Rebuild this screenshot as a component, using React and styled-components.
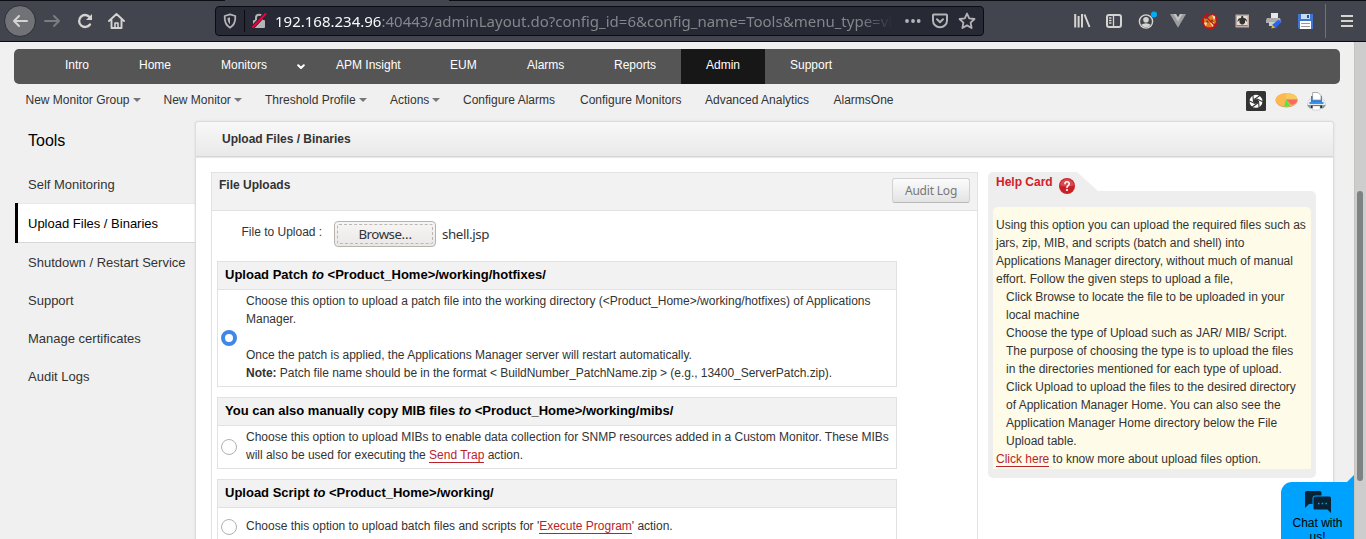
import React from 'react';
import styled, { createGlobalStyle } from 'styled-components';

const Global = createGlobalStyle`
  * { box-sizing: border-box; }
  body { margin: 0; overflow: hidden; background: #f0f0f0; }
`;
const Window = styled.div`
  width: 1366px; height: 539px; overflow: hidden; display: flex; flex-direction: column;
  font: 12px/18px "Liberation Sans", Arial, sans-serif; color: #333;
`;

/* Browser toolbar */
const TabEdge = styled.div`
  height: 1px; flex: none; display: flex; justify-content: space-between; background: #42454e;
`;
const Edge = styled.i`height: 1px; width: ${p => p.$w}px; background: #0d0e14;`;
const Chrome = styled.header`
  height: 41px; flex: none; display: flex; align-items: center;
  background: #42454d; border-bottom: 1px solid #0c0c0d; color: #d4d4d1;
`;
const Controls = styled.div`width: 215px; display: flex; align-items: center; padding-left: 4px;`;
const Back = styled.div`
  width: 32px; height: 32px; border-radius: 50%; background: #717278; border: 1px solid #2d2e34;
  display: flex; align-items: center; justify-content: center; margin-right: 8px;
`;
const Address = styled.div`
  width: 769px; height: 30px; border: 1px solid #0b0c13; border-radius: 4px; background: #272935;
  display: flex; align-items: center; padding-left: 6px; color: #b4b4b6;
`;
const Separator = styled.i`width: 1px; height: 22px; background: #0b0c13; margin: 0 6px 0 6px;`;
const Url = styled.div`
  width: 621px; margin-left: 8px; overflow: hidden; white-space: nowrap; color: #85868b;
  font: 15px/26px "Noto Sans", sans-serif;
  mask-image: linear-gradient(90deg, #000 585px, transparent 618px);
  b { font-weight: 400; color: #f9f9fa; }
`;
const AddressIcons = styled.div`display: flex; align-items: center; gap: 10px; margin-left: 8px;`;
const Extensions = styled.div`display: flex; align-items: center; gap: 14px; margin-left: 89px;`;
const MenuZone = styled.div`
  height: 34px; margin-left: 11px; padding-left: 15px; border-left: 1px solid #717278;
  display: flex; align-items: center;
`;

/* Page */
const Viewport = styled.div`flex: 1; min-height: 0; display: flex; background: #f0f0f0;`;
const Page = styled.div`width: 1354px; height: 497px; overflow: hidden; position: relative;`;
const ScrollTrack = styled.div`
  width: 12px; background: #cdcdcd; border-left: 1px solid #c6c3bf; padding: 149px 0 0 2px;
`;
const Thumb = styled.div`width: 6px; height: 290px; border-radius: 3px; background: #7e8283;`;
const Nav = styled.nav`
  margin: 7px 14px 0; height: 35px; border-radius: 5px; background: #555; padding-left: 26px; display: flex;
`;
const NavItem = styled.div`
  width: ${p => p.$w}px; padding-left: 25px; line-height: 32px; color: #fff; display: flex; white-space: nowrap;
  background: ${p => (p.$active ? '#171717' : 'none')};
  svg { margin: 15px 0 0 30px; }
`;
const SubNav = styled.div`height: 37px; padding-left: 25.5px; display: flex; white-space: nowrap; line-height: 32px;`;
const SubItem = styled.div`width: ${p => p.$w}px; display: flex; align-items: flex-start;`;
const Caret = styled.i`
  margin: 14px 0 0 3px; border: 4px solid transparent; border-top-color: #777; border-bottom: 0;
`;
const Tools = styled.div`display: flex; gap: 9px; margin-left: 350.5px; padding-top: 7px; align-items: flex-start;`;
const Columns = styled.div`display: flex;`;
const Sidebar = styled.aside`width: 195px; padding-left: 15px; font-size: 13px;`;
const SideTitle = styled.h1`margin: 0; padding: 8px 0 0 13px; height: 44px; font-size: 16px; line-height: 24px; font-weight: 400; color: #000;`;
const SideItem = styled.div`
  height: ${p => (p.$active ? 40 : 38)}px; line-height: 40px; white-space: nowrap;
  padding-left: ${p => (p.$active ? 10 : 13)}px;
  ${p => p.$active && 'background: #fff; color: #000; border-left: 3px solid #000; box-shadow: inset 0 -1px #d6d6d6, inset 0 1px #e8e8e8; line-height: 41px;'}
`;
const Panel = styled.main`
  width: 1139px; height: 430px; background: #fff; border: 1px solid #dcdcdc; border-radius: 4px 4px 0 0;
  box-shadow: 0 0 2px #d4d4d4;
`;
const PanelHead = styled.h2`
  margin: 0; height: 35px; padding-left: 26px; font-size: 12px; line-height: 34px;
  border-bottom: 1px solid #d5d5d5; box-shadow: 0 1px 1px #e6e6e6; border-radius: 4px 4px 0 0;
  background: linear-gradient(#f8f8f8, #e9e9e9);
`;
const PanelBody = styled.div`display: flex; padding: 15px 0 0 15px; align-items: flex-start;`;
const Uploads = styled.section`width: 767px; height: 400px; border: 1px solid #e2e2e2;`;
const UploadsHead = styled.div`
  height: 38px; background: #f2f2f2; border-bottom: 1px solid #e2e2e2; display: flex; justify-content: space-between;
  padding: 3px 7px 0; font-weight: 700;
`;
const AuditButton = styled.button`
  width: 78px; height: 25px; margin-top: 2px; padding: 0; border: 1px solid #d2d2d2; border-bottom-color: #b9b9b9; border-radius: 3px;
  background: linear-gradient(#fcfcfc, #e3e3e3); color: #777; font: 12px/22px "Noto Sans", sans-serif; letter-spacing: -0.2px;
`;
const FileRow = styled.div`height: 50px; display: flex; padding: 10px 0 0 29.500px; font-size: 12px;`;
const FileLabel = styled.label`width: 92.500px; line-height: 22px;`;
const Browse = styled.button`
  width: 102px; height: 26px; padding: 2px; border: 1px solid #b8b3ad; border-radius: 4px; background: linear-gradient(#f7f6f5, #eae8e6);
  span { display: block; height: 20px; border: 1px dashed #bbb7b3; border-radius: 2px; color: #333; font: 13.33px/19px "Noto Sans", sans-serif; letter-spacing: -0.5px; }
`;
const FileName = styled.span`margin-left: 6px; font: 13.33px/26px "Noto Sans", sans-serif; letter-spacing: -0.4px;`;
const Option = styled.section`width: 680px; margin: 0 0 10px 5px; border: 1px solid #e1e1e1;`;
const OptionHead = styled.h3`
  margin: 0; height: 28px; padding-left: 7px; background: #f2f2f2; border-bottom: 1px solid #e1e1e1;
  color: #000; font-size: 13px; line-height: 25px; white-space: nowrap;
`;
const OptionBody = styled.div`
  height: ${p => p.$h}px; padding: ${p => p.$top || 2}px 0 0 3px; display: flex; white-space: nowrap; letter-spacing: -0.01px;
`;
const PatchNote = styled.span`letter-spacing: -0.033px;`;
const Radio = styled.i`
  width: 16px; height: 16px; flex: none; margin: ${p => p.$top}px 9px 0 0; border-radius: 50%; background: #fff;
  border: ${p => (p.$checked ? '4px solid #3d88e8' : '1px solid #b6b0aa')};
`;
const Link = styled.a`color: #b9232b; border-bottom: 1px solid #b9232b; display: inline-block; line-height: 13px;`;
const Help = styled.aside`width: 328px; margin-left: 10px;`;
const HelpTab = styled.div`
  width: 110px; height: 19px; background: #eee; border-radius: 5px 0 0 0; clip-path: polygon(0 0, 89px 0, 110px 100%, 0 100%);
`;
const HelpFrame = styled.div`
  height: 287px; background: #eee; border-radius: 0 5px 5px 5px; padding: 16px 5px 9px;
`;
const HelpTitle = styled.div`
  position: absolute; top: 131px; left: 996px; height: 18px; display: flex; color: #d32027; font-weight: 700;
  svg { margin: 4px 0 0 6px; overflow: visible; }
`;
const HelpText = styled.div`height: 262px; background: #fffbe9; border-radius: 5px 5px 0 0; padding: 9px 0 0 3px; white-space: nowrap; letter-spacing: -0.006px;`;
const Steps = styled.div`padding-left: 10px;`;
const Chat = styled.div`
  position: absolute; left: 1281px; top: 440px; width: 73px; height: 80px; border-radius: 11px 0 0 0; background: #00a2ff;
  color: #000; text-align: center; line-height: 14px; padding-top: 8px;
  svg { display: block; margin: 0 auto 3px; }
`;
const ChatFold = styled.i`
  position: absolute; top: -7px; right: 0; width: 7px; height: 7px;
  background: #00a2ff; clip-path: polygon(100% 0, 100% 100%, 0 100%);
`;

const Icon = ({ w = 16, h = w, box = `0 0 ${w} ${h}`, children, ...rest }) => (
  <svg width={w} height={h} viewBox={box} fill="none" stroke="currentColor" strokeWidth="2" strokeLinecap="round" strokeLinejoin="round" {...rest}>{children}</svg>
);
const ForwardIcon = styled(Icon)`margin-right: 17px; color: #7b7c81;`;
const ReloadIcon = styled(Icon)`margin-right: 15px;`;
const AccountIcon = styled(Icon)`overflow: visible;`;
const blades = [0, 60, 120, 180, 240, 300];

const Toolbar = () => (
  <Chrome>
    <Controls>
      <Back><Icon><path d="M15 8H2M7 3 2 8l5 5" /></Icon></Back>
      <ForwardIcon><path d="M1 8h14M10 3l5 5-5 5" /></ForwardIcon>
      <ReloadIcon>
        <path d="M13 11.5A6 6 0 1 1 12.6 4" strokeWidth="2.3" /><path d="M15 1v6H9Z" fill="currentColor" stroke="none" />
      </ReloadIcon>
      <Icon w={17} h={16}>
        <path d="m1 8 7.500-7L16 8M3.500 7v8h10V7" strokeWidth="1.900" /><path d="M7 15v-5h3v5" strokeWidth="1.600" />
      </Icon>
    </Controls>
    <Address>
      <Icon><path d="M8 1.300 13.300 3c.3 5-.7 9-5.300 11.700C3.400 12 2.400 8 2.700 3Z" strokeWidth="1.800" /><path d="M8 4.300 5.500 5c0 2.600.8 4.800 2.500 6.300Z" fill="currentColor" stroke="none" /></Icon>
      <Separator />
      <Icon>
        <path d="M5 7V4.800a3 3 0 0 1 6 0V7" strokeWidth="2" /><rect x="2" y="7" width="12" height="8" rx="1" fill="currentColor" stroke="none" />
        <path d="M2 14 14 1" stroke="#272935" strokeWidth="4" /><path d="M2 14 14.500 1" stroke="#f5003d" strokeWidth="1.900" />
      </Icon>
      <Url><b>192.168.234.96</b>:40443/adminLayout.do?config_id=6&amp;config_name=Tools&amp;menu_type=view</Url>
      <AddressIcons>
        <Icon w={18} h={16} fill="currentColor" stroke="none"><circle cx="3" cy="8" r="1.900" /><circle cx="9" cy="8" r="1.900" /><circle cx="14.700" cy="8" r="1.900" /></Icon>
        <Icon w={16}><path d="M1.800 1.500h12.400a.8.8 0 0 1 .8.8V7.500a7 6.800 0 0 1-14 0V2.300A.8.8 0 0 1 1.800 1.500ZM5 6.300l3 3 3-3" /></Icon>
        <Icon w={18} h={18}><path d="m9 1.500 2.200 4.900 5.300.6-3.900 3.700 1 5.300L9 13.400 4.400 16l1-5.300L1.500 7l5.300-.6Z" strokeWidth="1.800" /></Icon>
      </AddressIcons>
    </Address>
    <Extensions>
      <Icon w={18} h={16} strokeLinecap="butt"><path d="M2.200 1v13.500M5.600 3v11.500M9 1v13.500M11.500 1.500l5 12.500" /></Icon>
      <Icon w={18} h={16}><rect x="2" y="2" width="14" height="12" rx="2" /><path d="M8.500 2v12M4.500 5H6M4.500 7.500H6M4.500 10H6" strokeWidth="1.300" /></Icon>
      <AccountIcon w={18} h={20} box="0 -3 18 20">
        <circle cx="9" cy="7.500" r="6.600" strokeWidth="1.400" /><circle cx="9" cy="5.800" r="2.800" fill="currentColor" stroke="none" />
        <path d="M4.200 10.800q4.800-3 9.600 0-2 2.500-4.800 2.500t-4.800-2.500Z" fill="currentColor" stroke="none" /><circle cx="17" cy="0.500" r="3" fill="#00aef5" stroke="none" />
      </AccountIcon>
      <Icon w={18} h={16} stroke="none"><path d="M1 1h6l2 3.500L11 1h6L9 14.700Z" fill="#9c9da0" /><path d="M4.500 1H7l2 3.500L11 1h2.500L9 8.800Z" fill="#c4c4c5" /></Icon>
      <Icon w={18} h={18} box="0 -1 18 18" stroke="none">
        <path d="m3 5 2 1 5-4 4 2 1 5-3 5-7 1-2-4Z" fill="#df791e" /><path d="m3 10 3-1-1 5ZM11 2l4 1-2 4Zm-2 8 4-1-1 5Z" fill="#f4e2c4" /><path d="m6 7 2 3-3-1M11 6l2 3-3-1" fill="#773817" />
        <circle cx="9" cy="8" r="7.400" stroke="#d10d15" strokeWidth="1.300" /><path d="m4 2.800 10 10" stroke="#d10d15" strokeWidth="1.300" />
      </Icon>
      <Icon w={18} h={16} stroke="none">
        <rect x="2.500" y="1.500" width="13.500" height="13" fill="#bdaaa2" /><rect x="4" y="3" width="10.500" height="9" fill="#e4dfdb" /><path d="M4.500 9q0-4 3.500-4l.5-2h1.500l.5 2q3.500 0 3.500 4l-2-2v3L10 11.500H8.500L6.500 10V7Z" fill="#35312e" /><path d="M4 12.500h10" stroke="#8b7a70" strokeWidth="1" />
      </Icon>
      <Icon w={18} h={18} stroke="none">
        <path d="M6 1h7v5H6Z" fill="#e8e8e8" /><path d="M2 6h13l1 3v2H1V8Z" fill="#aaa" /><path d="M4 10h8v4H4Z" fill="#ccc" /><path d="m7 13 6-5 4 1-6 7Z" fill="#2864f0" /><path d="m6.500 16.500.5-3.500 3.500 2.500Z" fill="#dfbb25" />
      </Icon>
      <Icon w={17} h={17} stroke="none">
        <path d="M1 1h15v15H2l-1-1Z" fill="#3f76d0" /><path d="M4 1h9v5H4Z" fill="#c8dcf5" /><path d="M10 2h2v3h-2Z" fill="#2353a4" /><path d="M3 8h11v8H3Z" fill="#fff" /><path d="M4.500 10.500h8M4.500 13.500h8" stroke="#999" strokeWidth="1" />
      </Icon>
    </Extensions>
    <MenuZone><Icon w={12} h={14} strokeLinecap="butt"><path d="M0 2h12M0 7h12M0 12h12" /></Icon></MenuZone>
  </Chrome>
);

const nav = [['Intro', 74], ['Home', 82], ['Monitors', 115], ['APM Insight', 114], ['EUM', 77], ['Alarms', 87], ['Reports', 92], ['Admin', 84], ['Support', 90]];
const sub = [['New Monitor Group', 138, 1], ['New Monitor', 101.5, 1], ['Threshold Profile', 125, 1], ['Actions', 73, 1], ['Configure Alarms', 117], ['Configure Monitors', 125], ['Advanced Analytics', 128.5], ['AlarmsOne', 62]];
const side = ['Self Monitoring', 'Upload Files / Binaries', 'Shutdown / Restart Service', 'Support', 'Manage certificates', 'Audit Logs'];

export default function App() {
  return (
    <Window>
      <Global />
      <TabEdge><Edge $w={225} /><Edge $w={917} /></TabEdge>
      <Toolbar />
      <Viewport>
        <Page>
          <Nav>
            {nav.map(([t, w]) => (
              <NavItem key={t} $w={w} $active={t === 'Admin'}>{t}
                {t === 'Monitors' && <Icon w={8} h={6}><path d="m1.200 1.200 2.800 2.800 2.800-2.800" /></Icon>}
              </NavItem>
            ))}
          </Nav>
          <SubNav>
            {sub.map(([t, w, menu]) => <SubItem key={t} $w={w}>{t}{menu && <Caret />}</SubItem>)}
            <Tools>
              <Icon w={20} stroke="none">
                <rect width="20" height="20" rx="1.500" fill="#333" /><circle cx="10" cy="10.300" r="6.500" fill="#fff" />
                <circle cx="10" cy="10.300" r="2.400" fill="#333" />
                {blades.map(a => <path key={a} d="M8.500 8.300 13.700 4.600" transform={`rotate(${a} 10 10.300)`} stroke="#333" strokeWidth="1.100" />)}
              </Icon>
              <Icon w={23} h={18} stroke="none">
                <ellipse cx="11.500" cy="9.500" rx="11" ry="7" fill="#d9a867" /><ellipse cx="11.500" cy="8.700" rx="11" ry="6.700" fill="#ffb850" />
                <path d="M11.500 2q10 0 11 6H11Z" fill="#f8c95c" /><path d="M11 8.500h11.500q0 4-6 5.500Z" fill="#fa6868" /><path d="M11 8.500 9 15.300q4 .5 6.500-.8Z" fill="#4ee84e" />
              </Icon>
              <Icon w={19} h={20} stroke="none">
                <path d="m1 10 3-3h11l3 3 .5 5-2.500 2.500H3L.5 15Z" fill="#8f959c" /><path d="m1 10 3-3h11l3 3v4H1Z" fill="#e7edf3" />
                <path d="M4 5h11v6H4Z" fill="#2b7fe0" /><path d="M6 1.500h5l3 3V9H6Z" fill="#fff" stroke="#999" strokeWidth=".8" />
                <path d="M2.500 11h14v2h-14Z" fill="#3c91e8" /><path d="M4 14.500h11V17H4Z" fill="#2c2c2e" /><path d="M6 15h7v4H6Z" fill="#fff" stroke="#bbb" strokeWidth=".5" /><path d="M15.500 14h1.500v1.500h-1.500Z" fill="#53d33e" />
              </Icon>
            </Tools>
          </SubNav>
          <Columns>
            <Sidebar>
              <SideTitle>Tools</SideTitle>
              {side.map((t, i) => <SideItem key={t} $active={i === 1}>{t}</SideItem>)}
            </Sidebar>
            <Panel>
              <PanelHead>Upload Files / Binaries</PanelHead>
              <PanelBody>
                <Uploads>
                  <UploadsHead>File Uploads<AuditButton>Audit Log</AuditButton></UploadsHead>
                  <FileRow><FileLabel>File to Upload :</FileLabel><Browse><span>Browse…</span></Browse><FileName>shell.jsp</FileName></FileRow>
                  <Option>
                    <OptionHead>Upload Patch <em>to</em> &lt;Product_Home&gt;/working/hotfixes/</OptionHead>
                    <OptionBody $h={96}><Radio $checked $top={38} />
                      <div>Choose this option to upload a patch file into the working directory (&lt;Product_Home&gt;/working/hotfixes) of Applications<br />Manager.<br /><br />Once the patch is applied, the Applications Manager server will restart automatically.<br /><PatchNote><b>Note:</b> Patch file name should be in the format &lt; BuildNumber_PatchName.zip &gt; (e.g., 13400_ServerPatch.zip).</PatchNote></div>
                    </OptionBody>
                  </Option>
                  <Option>
                    <OptionHead>You can also manually copy MIB files <em>to</em> &lt;Product_Home&gt;/working/mibs/</OptionHead>
                    <OptionBody $h={42}><Radio $top={11} />
                      <div>Choose this option to upload MIBs to enable data collection for SNMP resources added in a Custom Monitor. These MIBs<br />will also be used for executing the <Link>Send Trap</Link> action.</div>
                    </OptionBody>
                  </Option>
                  <Option>
                    <OptionHead>Upload Script <em>to</em> &lt;Product_Home&gt;/working/</OptionHead>
                    <OptionBody $h={42} $top={9}><Radio $top={2} />
                      <div>Choose this option to upload batch files and scripts for '<Link>Execute Program</Link>' action.</div>
                    </OptionBody>
                  </Option>
                </Uploads>
                <Help>
                  <HelpTab />
                  <HelpFrame>
                    <HelpText>
                      Using this option you can upload the required files such as<br />jars, zip, MIB, and scripts (batch and shell) into<br />Applications Manager directory, without much of manual<br />effort. Follow the given steps to upload a file,
                      <Steps>Click Browse to locate the file to be uploaded in your<br />local machine<br />Choose the type of Upload such as JAR/ MIB/ Script.<br />The purpose of choosing the type is to upload the files<br />in the directories mentioned for each type of upload.<br />Click Upload to upload the files to the desired directory<br />of Application Manager Home. You can also see the<br />Application Manager Home directory below the File<br />Upload table.</Steps>
                      <Link>Click here</Link> to know more about upload files option.
                    </HelpText>
                  </HelpFrame>
                </Help>
              </PanelBody>
            </Panel>
          </Columns>
          <HelpTitle>Help Card
            <Icon w={17} stroke="none">
              <circle cx="8" cy="9" r="8" fill="#c91f26" /><path d="M1 8.500a7 6.500 0 0 1 14 0q-7 2-14 0Z" fill="#d94a4d" />
              <path d="M6 6.800Q6 4.800 8 4.800T10.200 6.700Q10.200 8 9 8.700 8 9.300 8 10.400" stroke="#fff" strokeWidth="1.600" /><circle cx="8" cy="13" r="1.100" fill="#fff" />
            </Icon>
          </HelpTitle>
          <Chat>
            <ChatFold />
            <Icon w={28} h={23} stroke="none">
              <path d="M2.500 1h13a2 2 0 0 1 2 2v2.500h-6a3 3 0 0 0-3 3V14H5l-4 4V2.500A1.500 1.500 0 0 1 2.500 1Z" fill="#082333" />
              <path d="M11 6.500h14.500A1.500 1.500 0 0 1 27 8v15l-3.500-3.500H11A1.500 1.500 0 0 1 9.500 18V8A1.500 1.500 0 0 1 11 6.500Z" fill="#082333" />
              <path d="M14 13.500h1.500m2.200 0h1.500m2.200 0h1.500" stroke="#00a2ff" strokeWidth="1.300" strokeLinecap="butt" />
            </Icon>
            Chat with<br />us!
          </Chat>
        </Page>
        <ScrollTrack><Thumb /></ScrollTrack>
      </Viewport>
    </Window>
  );
}
